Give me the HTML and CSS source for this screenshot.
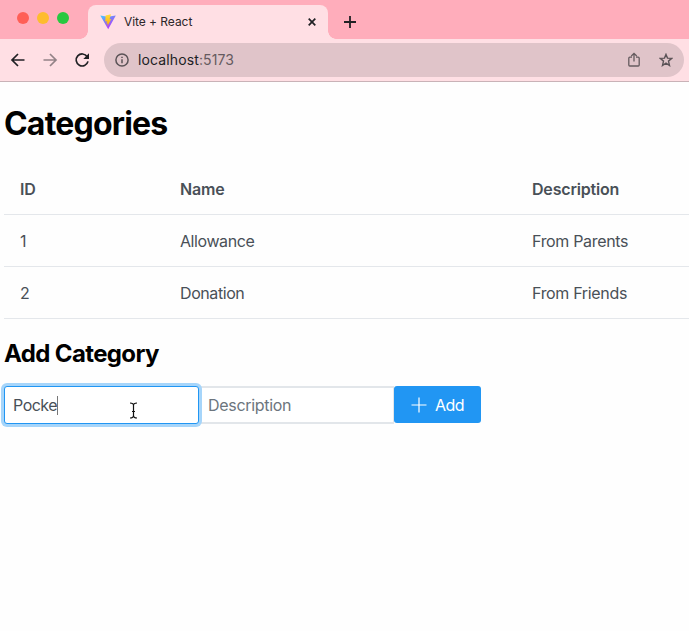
FILE: index.html
```html
<!DOCTYPE html>
<html lang="en">
<head>
<meta charset="utf-8">
<title>Vite + React</title>
<link rel="stylesheet" href="styles.css">
</head>
<body>
<header class="browser">
  <div class="tabstrip">
    <div class="lights"><i class="light red"></i><i class="light yellow"></i><i class="light green"></i></div>
    <div class="tab">
      <svg class="favicon" width="16" height="16" viewBox="0 0 16 16">
        <defs>
          <linearGradient id="va" x1="0" y1="0" x2="0.6" y2="1"><stop stop-color="#41d1ff"/><stop offset=".45" stop-color="#7c7cf8"/><stop offset="1" stop-color="#bd34fe"/></linearGradient>
          <linearGradient id="vb" x1="0" y1="0" x2="0" y2="1"><stop stop-color="#ffdf3a"/><stop offset="1" stop-color="#ffa800"/></linearGradient>
        </defs>
        <path d="M0.3 1.5 7.8 2.7 15.8 1.5 8.2 15.3Z" fill="url(#va)"/>
        <path d="M11 .3 5.6 1.4 5.2 7.5 7 7.2 6.5 9.8 7.9 9.4 7.3 12.4 11.3 5 9.5 5.3Z" fill="url(#vb)"/>
      </svg>
      <span class="tab-title">Vite + React</span>
      <svg class="tab-close" width="8" height="8" viewBox="0 0 8 8"><path d="M.7.7 7.3 7.3M7.3.7.7 7.3"/></svg>
    </div>
    <svg class="new-tab" width="12" height="12" viewBox="0 0 12 12"><path d="M6 0V12M0 6H12"/></svg>
  </div>
  <div class="toolbar">
    <svg class="nav" width="16" height="16" viewBox="0 0 16 16"><path d="M14.5 8H2.5M8 2 2 8 8 14"/></svg>
    <svg class="nav muted" width="16" height="16" viewBox="0 0 16 16"><path d="M1.5 8H13.5M8 2 14 8 8 14"/></svg>
    <svg class="nav" width="16" height="16" viewBox="0 0 16 16"><path d="M13.2 4.7A6 6 0 1 0 14 9.4"/><path class="solid" d="M15 1.3V7H9.3Z"/></svg>
    <div class="address">
      <svg class="info" width="14" height="14" viewBox="0 0 14 14"><circle cx="7" cy="7" r="6.1"/><path d="M7 6.2V10.3M7 3.7V5.1"/></svg>
      <span class="url">localhost<span class="port">:5173</span></span>
      <svg class="share" width="12" height="16" viewBox="0 0 12 16"><path d="M4 5.2H1.8Q.8 5.2.8 6.2V13Q.8 14 1.8 14H10.2Q11.2 14 11.2 13V6.2Q11.2 5.2 10.2 5.2H8M6 9.6V1.7M3.3 4 6 1.3 8.7 4"/></svg>
      <svg class="star" width="14" height="14" viewBox="0 0 14 14"><path d="M7 1.4 8.5 5.1 12.7 5.4 9.5 8.1 10.5 12.5 7 10.2 3.5 12.5 4.5 8.1 1.3 5.4 5.5 5.1Z"/></svg>
    </div>
  </div>
</header>
<main>
  <h1>Categories</h1>
  <table>
    <colgroup><col class="col-id"><col class="col-name"><col></colgroup>
    <thead><tr><th>ID</th><th>Name</th><th>Description</th></tr></thead>
    <tbody>
      <tr><td>1</td><td>Allowance</td><td>From Parents</td></tr>
      <tr><td>2</td><td>Donation</td><td>From Friends</td></tr>
    </tbody>
  </table>
  <h2>Add Category</h2>
  <div class="form">
    <div class="field focused"><span>Pocke</span><i class="caret"></i>
      <svg class="pointer" width="9" height="17" viewBox="0 0 9 17"><path d="M1 1Q4.5 1 4.5 3.5V13.5Q4.5 16 1 16M8 1Q4.5 1 4.5 3.5M4.5 13.5Q4.5 16 8 16M3 9.5H6"/></svg>
    </div>
    <div class="field placeholder"><span>Description</span></div>
    <button class="add"><svg width="16" height="16" viewBox="0 0 16 16"><path d="M8 .5V15.5M.5 8H15.5"/></svg><span>Add</span></button>
  </div>
</main>
</body>
</html>
```
FILE: styles.css
```css
* { box-sizing: border-box; }
body { margin: 0; height: 631px; overflow: hidden; background: #fefefe; color: #495057; font: 16px/20px Inter, sans-serif; }
svg { flex: none; display: block; fill: none; }
.browser { height: 82px; background: #ffdfe4; border-bottom: 1px solid #c9b2b7; }
.tabstrip { display: flex; height: 39px; background: #ffadbb; }
.lights { display: flex; gap: 8px; padding: 12px 0 0 17px; width: 88px; }
.light { width: 12px; height: 12px; border-radius: 50%; }
.red { background: #ff5f57; }
.yellow { background: #febc2e; }
.green { background: #28c840; }
.tab { position: relative; display: flex; align-items: center; width: 240px; height: 34px; margin-top: 5px; padding: 0 12px; background: #ffdfe4; border-radius: 8px 8px 0 0; }
.tab::before, .tab::after { content: ""; position: absolute; bottom: 0; width: 8px; height: 8px; }
.tab::before { left: -8px; background: radial-gradient(circle at 0 0, #ffadbb 7.5px, #ffdfe4 8px); }
.tab::after { right: -8px; background: radial-gradient(circle at 100% 0, #ffadbb 7.5px, #ffdfe4 8px); }
.tab-title { margin-left: 8px; font-size: 12px; color: #2b2629; letter-spacing: -.05px; }
.tab-close { margin-left: auto; stroke: #202124; stroke-width: 1.7; }
.new-tab { margin: 16px 0 0 16px; stroke: #202124; stroke-width: 1.8; }
.toolbar { display: flex; align-items: center; height: 42px; padding: 0 5px 0 10px; }
.nav { margin-right: 16px; stroke: #202124; stroke-width: 1.7; }
.nav:nth-child(3) { margin-right: 14px; }
.muted { opacity: .48; }
.solid { fill: #202124; stroke: none; }
.address { flex: 1; display: flex; align-items: center; height: 34px; padding: 0 11px; border-radius: 17px; background: #e0c4c9; }
.info { stroke: #5b5357; stroke-width: 1.5; }
.url { margin-left: 9px; font-size: 14px; color: #202124; letter-spacing: .12px; }
.port { color: #655b5f; }
.share { margin-left: auto; stroke: #655b5f; stroke-width: 1.3; }
.star { margin-left: 19px; stroke: #5b5357; stroke-width: 1.4; }
main { padding: 22px 0 0 4px; }
h1, h2 { margin: 0; color: #000; font-weight: 700; }
h1 { font-size: 32px; line-height: 40px; letter-spacing: -.8px; }
h2 { margin-top: 20px; font-size: 24px; line-height: 30px; letter-spacing: -.63px; }
table { width: 100%; margin-top: 19px; table-layout: fixed; border-spacing: 0; }
.col-id { width: 160px; }
.col-name { width: 352px; }
th, td { height: 52px; padding: 0 16px; text-align: left; border-bottom: 1px solid #e4e7eb; white-space: nowrap; letter-spacing: -.33px; }
th { font-weight: 600; letter-spacing: -.18px; }
td:nth-child(2) { letter-spacing: -.42px; }
.form { display: flex; margin-top: 17px; height: 38px; }
.field { position: relative; display: flex; align-items: center; width: 195px; height: 38px; padding: 0 8px; border: 1px solid #e2e6ea; border-width: 2px 1px; background: #fff; letter-spacing: -.5px; }
.focused { z-index: 1; border: 1px solid #2196f3; border-radius: 3px; box-shadow: 0 0 0 3px #a6d5fa; }
.placeholder { color: #6c757d; border-left: 0; padding-left: 9px; letter-spacing: -.3px; }
.caret { width: 1px; height: 19px; background: #777; }
.pointer { position: absolute; left: 124px; top: 15px; stroke: #111; stroke-width: 1.2; }
.add { display: flex; align-items: center; width: 87px; height: 37px; padding: 0 17px; border: 0; border-radius: 3px; background: #2196f3; color: #fff; font: 16px/20px Inter, sans-serif; }
.add svg { stroke: #fff; stroke-width: 1.2; }
.add span { margin-left: 8px; letter-spacing: -.5px; }
```
